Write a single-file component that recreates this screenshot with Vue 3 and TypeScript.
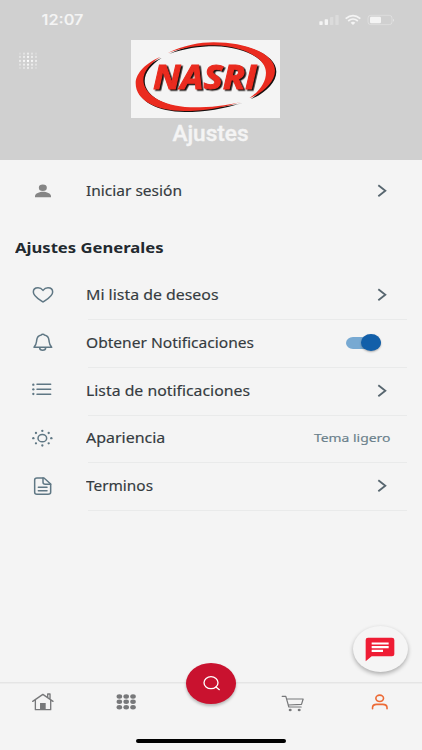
<script setup lang="ts">
import { ref } from 'vue'

type IconName = 'heart' | 'bell' | 'list' | 'sun' | 'doc'

interface Setting {
  icon: IconName
  label: string
  width: number
  kind: 'link' | 'toggle' | 'value'
  value?: string
}

const settings: Setting[] = [
  { icon: 'heart', label: 'Mi lista de deseos', width: 132.5, kind: 'link' },
  { icon: 'bell', label: 'Obtener Notificaciones', width: 168, kind: 'toggle' },
  { icon: 'list', label: 'Lista de notificaciones', width: 164, kind: 'link' },
  { icon: 'sun', label: 'Apariencia', width: 79.3, kind: 'value', value: 'Tema ligero' },
  { icon: 'doc', label: 'Terminos', width: 67, kind: 'link' },
]

const notifications = ref(true)

const loaderDots = [6, 18, 30, 42, 54].flatMap((x, i) =>
  [5, 15, 27, 38, 48].map((y, j) => ({
    x,
    y,
    o: Math.max(0.2, 1 - 0.2 * (Math.abs(i - 2) + Math.abs(j - 2))),
  })),
)
const sunDots = [0, 1, 2, 3, 4, 5, 6, 7].map((i) => ({
  x: 37 + 27 * Math.cos((i * Math.PI) / 4),
  y: 36.5 + 22 * Math.sin((i * Math.PI) / 4),
}))

const upperArc =
  'M143 69C190 46 240 37 280 37C390 38 464 75 464 122C464 155 430 187 387 205C420 182 437 155 437 128C437 85 370 48 280 46C232 46 188 53 143 69Z'
const lowerArc =
  'M121 81C80 98 47 128 47 160C47 212 110 243 190 243C250 243 310 233 364 215C315 228 260 233 210 232C125 228 70 192 70 150C70 124 91 99 121 81Z'
</script>

<template>
  <div class="screen">
    <header class="header">
      <div class="status">
        <svg class="time" width="50" height="20">
          <text x="0.5" y="15" textLength="42" lengthAdjust="spacingAndGlyphs">12:07</text>
        </svg>
        <svg class="signals" width="78" height="14" viewBox="321 39 234 42">
          <g fill="#f4f4f4">
            <rect x="325" y="64" width="10" height="11" rx="2" />
            <rect x="341" y="58" width="10" height="17" rx="2" />
            <rect x="357" y="51" width="10" height="24" rx="2" opacity=".3" />
            <rect x="373" y="45" width="10" height="30" rx="2" opacity=".3" />
            <rect x="477" y="50" width="33" height="20" rx="4" />
            <path d="M546 56 q6 4 0 9z" opacity=".6" />
            <path d="M419 68 q7 -6 14 0 l-7 7z" />
          </g>
          <g fill="none" stroke="#f4f4f4">
            <path d="M404 56 Q426 38 448 56 M411.500 63 Q426 51 440.500 63" stroke-width="5" />
            <rect x="471" y="46" width="72" height="28" rx="8" stroke-width="2.500" opacity=".45" />
          </g>
        </svg>
      </div>
      <div class="brand">
        <svg class="loader" width="20" height="18" viewBox="0 0 60 54">
          <circle v-for="(d, i) in loaderDots" :key="i" :cx="d.x" :cy="d.y" r="3.4" :opacity="d.o" fill="#fff" />
        </svg>
        <svg class="logo" width="149" height="78" viewBox="33 30 446 234" preserveAspectRatio="none">
          <g fill="#17100f" transform="translate(4 3)">
            <path :d="upperArc" />
            <path :d="lowerArc" />
          </g>
          <g fill="#ea2b1f">
            <path :d="upperArc" />
            <path :d="lowerArc" />
          </g>
          <text class="logo-text" x="99" y="178" textLength="310" lengthAdjust="spacingAndGlyphs">NASRI</text>
        </svg>
      </div>
      <svg class="title" width="90" height="32">
        <text x="6.500" y="23" textLength="76" lengthAdjust="spacingAndGlyphs">Ajustes</text>
      </svg>
    </header>

    <main class="content">
      <div class="row login">
        <svg class="icon" width="26" height="26" viewBox="0 0 78 78" fill="#858585">
          <ellipse cx="38.500" cy="29" rx="12" ry="9.800" />
          <path d="M15 58v-4c0-8 14-13 24-13s24 5 24 13v4z" />
        </svg>
        <svg class="label" width="220" height="48">
          <text x="0" y="29" textLength="96" lengthAdjust="spacingAndGlyphs">Iniciar sesión</text>
        </svg>
        <svg class="chevron" width="11" height="14" viewBox="0 0 33 42"><path d="M4 4l21 16.500L4 37" /></svg>
      </div>

      <h2 class="heading">
        <svg width="170" height="28">
          <text x="0" y="20" textLength="148.500" lengthAdjust="spacingAndGlyphs">Ajustes Generales</text>
        </svg>
      </h2>

      <div v-for="s in settings" :key="s.label" class="row">
        <svg class="icon line" width="26" height="26" viewBox="0 0 78 78">
          <path v-if="s.icon === 'heart'" d="M39 57C30 50 10 41 10 27C10 18 17 14 24 14C31 14 36 18 39 22C42 18 47 14 54 14C61 14 68 18 68 27C68 41 48 50 39 57Z" />
          <template v-else-if="s.icon === 'bell'">
            <path d="M12 52C20 43 19 39 20 31C21 21 27 16 34 15C35 12 42 12 43 15C50 16 56 21 57 31C58 39 57 43 65 52Z" />
            <path d="M29 53C29 63 47 63 47 53" />
          </template>
          <template v-else-if="s.icon === 'list'">
            <path d="M21 19H62M21 34H62M21 48.500H62" />
            <g class="dots"><circle cx="10" cy="20" r="3.500" /><circle cx="10" cy="34" r="3.500" /><circle cx="10" cy="48" r="3.500" /></g>
          </template>
          <template v-else-if="s.icon === 'sun'">
            <ellipse cx="37" cy="36.500" rx="13" ry="11" />
            <g class="dots"><circle v-for="(d, i) in sunDots" :key="i" :cx="d.x" :cy="d.y" r="3.500" /></g>
          </template>
          <template v-else>
            <path d="M21 12H42L62 30V55Q62 61 54 61H21Q14 61 14 55V18Q14 12 21 12Z" />
            <path d="M39 12V25Q39 31 46 31H62M25 40H51M25 50H51" />
          </template>
        </svg>
        <svg class="label" width="220" height="47">
          <text x="0" y="28" :textLength="s.width" lengthAdjust="spacingAndGlyphs">{{ s.label }}</text>
        </svg>
        <svg v-if="s.kind === 'link'" class="chevron" width="11" height="14" viewBox="0 0 33 42"><path d="M4 4l21 16.500L4 37" /></svg>
        <button v-else-if="s.kind === 'toggle'" class="toggle" :class="{ on: notifications }" @click="notifications = !notifications"><span class="knob"></span></button>
        <svg v-else class="value" width="78" height="47">
          <text x="1" y="27.300" textLength="76.500" lengthAdjust="spacingAndGlyphs">{{ s.value }}</text>
        </svg>
      </div>
    </main>

    <nav class="tabs">
      <svg class="tab" viewBox="0 96 253 168">
        <g fill="none" stroke="#77787a" stroke-width="4" stroke-linejoin="round" stroke-linecap="round">
          <path d="M98 154L128.500 133L159 154M106 150V179H152V150M143 141V132H150V146" />
        </g>
        <rect x="120" y="159" width="17" height="20" fill="#77787a" />
      </svg>
      <svg class="tab" viewBox="253 96 253 168" fill="#77787a">
        <template v-for="y in [139.5, 155.5, 171.5]" :key="y">
          <ellipse v-for="x in [359, 379.5, 400]" :key="x" :cx="x" :cy="y" rx="8.300" ry="6.800" />
        </template>
      </svg>
      <div class="tab center">
        <button class="fab">
          <svg width="20" height="18" viewBox="0 0 60 54" fill="none" stroke="#fff" stroke-width="4" stroke-linecap="round">
            <ellipse cx="30" cy="26" rx="21" ry="18" /><path d="M45 39L55 47" />
          </svg>
        </button>
      </div>
      <svg class="tab" viewBox="126.600 216 253 168" fill="none" stroke="#77787a" stroke-width="3.600" stroke-linecap="round" stroke-linejoin="round">
        <path d="M214 259H225L234 291H271M228 267H277L272 283L232 285" />
        <g fill="#77787a" stroke="none"><ellipse cx="238" cy="300" rx="4.500" ry="4" /><ellipse cx="265" cy="300" rx="4.500" ry="4" /></g>
      </svg>
      <svg class="tab" viewBox="380 216 253 168" fill="none" stroke="#ec6a35" stroke-width="4.800" stroke-linecap="round">
        <ellipse cx="505" cy="265" rx="11.500" ry="9.500" />
        <path d="M483.500 296V293Q483.500 283 496 283H514Q527 283 527 293V296" />
      </svg>
    </nav>
    <div class="home-bar"></div>

    <button class="chat">
      <svg width="30" height="25" viewBox="0 0 90 75">
        <path d="M9 2H81Q88 2 88 9V52Q88 58 81 58H20L2 73V9Q2 2 9 2Z" fill="#ef1c34" />
        <path d="M20 19.500H71M20 30.500H71M20 41.500H54" stroke="#fff" stroke-width="6.500" />
      </svg>
    </button>
  </div>
</template>

<style>
body {
  background: #f4f4f4;
}
</style>

<style scoped>
.screen {
  position: relative;
  width: 422px;
  height: 750px;
  overflow: hidden;
  background: #f4f4f4;
  display: flex;
  flex-direction: column;
  font-family: 'Noto Sans', sans-serif;
}
svg {
  display: block;
  flex: none;
}
button {
  border: 0;
  padding: 0;
}
.header {
  height: 159.5px;
  flex: none;
  background: #d0d0d0;
  display: flex;
  flex-direction: column;
}
.status {
  height: 30px;
  padding: 10px 26px 0 41px;
  display: flex;
  justify-content: space-between;
  box-sizing: border-box;
}
.time text {
  font: 600 14px Inter, sans-serif;
  fill: #f4f4f4;
}
.signals {
  margin-top: 3px;
}
.brand {
  display: flex;
  padding: 10px 0 0 18px;
  height: 88px;
  box-sizing: border-box;
}
.loader {
  margin-top: 12px;
}
.logo {
  margin-left: 92.5px;
  background: #f4f4f4;
}
.logo-text {
  font: italic 700 101px 'Open Sans', sans-serif;
  fill: #ea2b1f;
  stroke: #ea2b1f;
  stroke-width: 3;
  filter: drop-shadow(5px 4px 0 #17100f);
}
.title {
  align-self: center;
}
.title text {
  font: 500 22.5px Roboto, sans-serif;
  fill: #f4f4f4;
  stroke: #f4f4f4;
  stroke-width: 0.4;
}
.content {
  height: 522.5px;
  flex: none;
}
.row {
  height: 47.75px;
  box-sizing: border-box;
  display: flex;
  align-items: center;
  padding: 0 36px 0 30px;
  position: relative;
}
.row:not(.login)::after {
  content: '';
  position: absolute;
  left: 88px;
  right: 15px;
  bottom: -0.5px;
  height: 1px;
  background: #e9eaea;
}
.login {
  margin-top: 8px;
}
.label {
  margin-left: 30px;
  margin-right: auto;
}
.label text {
  font-size: 13.7px;
  fill: #353b40;
  stroke: #353b40;
  stroke-width: 0.15;
}
.chevron {
  margin-bottom: 1px;
  margin-right: -2px;
}
.chevron path {
  fill: none;
  stroke: #57666f;
  stroke-width: 5.5;
}
.line {
  fill: none;
  stroke: #5f7784;
  stroke-width: 4.5;
  stroke-linecap: round;
  stroke-linejoin: round;
}
.dots {
  fill: #5f7784;
  stroke: none;
}
.heading {
  margin: 18px 0 0;
  padding-left: 15px;
  height: 38.5px;
}
.heading text {
  font-size: 14.8px;
  font-weight: 700;
  fill: #22292f;
}
.value {
  margin-right: -5px;
}
.value text {
  font-size: 11.6px;
  fill: #6a7f8b;
  stroke: #6a7f8b;
  stroke-width: 0.15;
}
.toggle {
  width: 35px;
  height: 12px;
  border-radius: 7px / 6px;
  background: #b5bcc1;
  display: flex;
  align-items: center;
  margin-right: 5px;
  margin-bottom: 1px;
}
.toggle.on {
  background: #77a9d2;
  justify-content: flex-end;
}
.knob {
  width: 20px;
  height: 17px;
  border-radius: 50%;
  background: #125fa9;
  box-shadow: 0 1px 2px rgba(0, 0, 0, 0.3);
}
.tabs {
  height: 56px;
  flex: none;
  display: flex;
  box-shadow: inset 0 1.5px #e5e5e5;
}
.tab {
  width: 84.4px;
  height: 56px;
}
.center {
  display: flex;
  justify-content: center;
  align-items: flex-start;
}
.fab {
  width: 50px;
  height: 41px;
  margin-top: -19.5px;
  border-radius: 50%;
  background: #c9122f;
  display: flex;
  align-items: center;
  justify-content: center;
  box-shadow: 0 2px 3px rgba(0, 0, 0, 0.25);
}
.home-bar {
  width: 150px;
  height: 4px;
  margin: 0.5px auto 0;
  border-radius: 2px;
  background: #000;
}
.chat {
  position: absolute;
  left: 352.5px;
  top: 626px;
  width: 55px;
  height: 46px;
  border-radius: 50%;
  background: #f5f5f5;
  display: flex;
  align-items: center;
  justify-content: center;
  box-shadow: 0 2px 4px rgba(0, 0, 0, 0.3);
}
</style>
